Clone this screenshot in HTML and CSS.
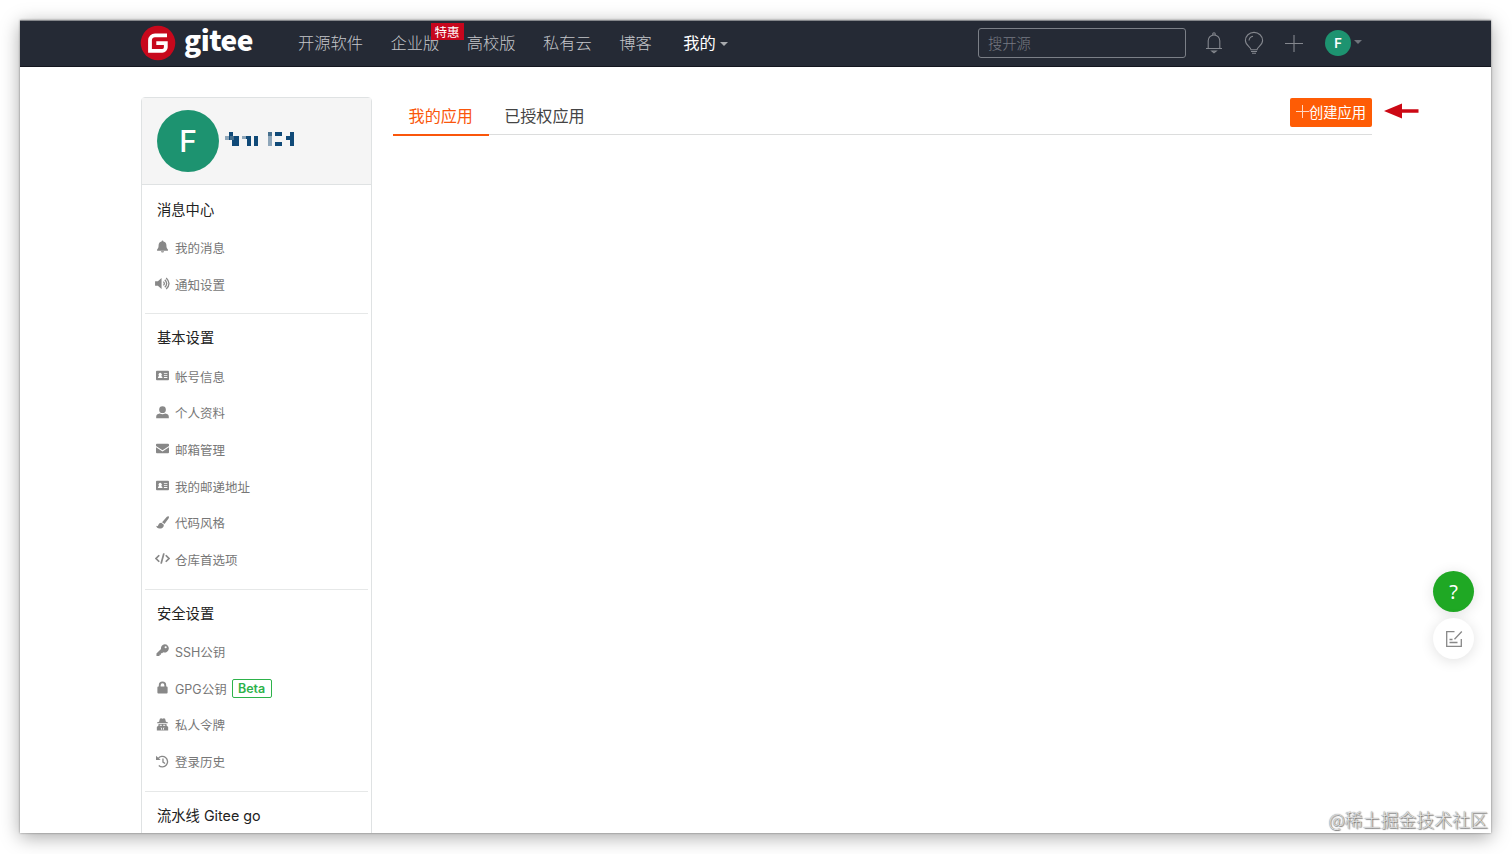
FILE: index.html
```html
<!DOCTYPE html>
<html lang="zh-CN">
<head>
    <meta charset="UTF-8">
    <meta name="viewport" content="width=device-width, initial-scale=1.0">
    <title>我的应用 - Gitee</title>
    <link rel="stylesheet" href="styles.css">
</head>
<body>
    <!-- shared icons -->
    <svg width="0" height="0" class="icon-defs">
        <symbol id="icon-card" viewBox="0 0 14 14">
            <path fill-rule="evenodd" d="M1 2h12q1 0 1 1v8q0 1-1 1H1q-1 0-1-1V3q0-1 1-1zM2 9.8h5q0-2-1.4-2.3a1.8 1.8 0 1 0-2.2 0Q2 7.8 2 9.8zM8.5 4.5v1h3.7v-1zM8.5 6.6v1h3.7v-1zM8.5 8.7v1h3.7v-1z"/>
        </symbol>
    </svg>

    <div class="window">
        <header class="navbar">
            <a class="logo">
                <svg width="36" height="36" viewBox="0 0 36 36">
                    <circle cx="18" cy="18" r="17.3" fill="#c7081c"/>
                    <path d="M27 10.3H15a5 5 0 0 0-5 5v10.5h12.3a3.500 3.500 0 0 0 3.500-3.500v-4.100h-9.500" fill="none" stroke="#fff" stroke-width="3.8"/>
                </svg>
                <span class="logo-text">gitee</span>
            </a>
            <nav class="nav-links">
                <a>开源软件</a>
                <a class="enterprise">企业版<span class="promo">特惠</span></a>
                <a>高校版</a>
                <a>私有云</a>
                <a>博客</a>
                <a class="mine">我的<i class="caret"></i></a>
            </nav>
            <div class="nav-right">
                <input class="search" type="text" placeholder="搜开源">
                <svg class="nav-icon bell" width="20" height="24" viewBox="0 0 20 24">
                    <path d="M2 17.5h16M4.2 17.5V9.8a5.8 5.8 0 0 1 11.6 0v7.7M8.8 4V3a1.2 1.2 0 0 1 2.4 0v1M7.8 20h4.4L10 21.8z"/>
                </svg>
                <svg class="nav-icon bulb" width="20" height="24" viewBox="0 0 20 24">
                    <path d="M7 18.7c0-2.6-5.6-4.2-5.6-9.2a8.6 8.1 0 0 1 17.2 0c0 5-5.6 6.6-5.6 9.2zM5 9.5a4.8 4.8 0 0 1 4-4.2M7 20.5h6M8 22.3h4"/>
                </svg>
                <svg class="nav-icon plus" width="20" height="24" viewBox="0 0 20 24">
                    <path d="M1 12.5h18M10 4v17"/>
                </svg>
                <span class="avatar-small">F</span>
                <i class="caret caret-dim"></i>
            </div>
        </header>

        <div class="container">
            <aside class="sidebar">
                <div class="profile">
                    <span class="avatar">F</span>
                    <!-- pixelated user name -->
                    <svg class="user-name" width="70" height="17" viewBox="0 0 70 17" shape-rendering="crispEdges">
                        <path fill="#104a78" d="M4 1h4v4h6v10H7V9H4zM18 5h8v10h-4V8h-4zM29 5h4v10h-4zM50 1h7v4h-7zM50 11h7v4h-7zM65 1h4v14h-4V9h-4V5h4z"/>
                        <path fill="#8fa7ba" d="M0 5h4v4H0zM17 5h4v3h-4zM43 5h4v10h-4z"/>
                        <path fill="#47708e" d="M43 1h4v4h-4zM5 5h4v4H5z"/>
                    </svg>
                </div>
                <section class="menu">
                    <h3>消息中心</h3>
                    <a><svg viewBox="0 0 14 14"><path d="M7 .5a1 1 0 0 1 1 1q3.2.8 3.2 4.2c0 3 .7 3.5 1.6 4.5q.7 1.3-.5 1.4H1.7q-1.2-.1-.5-1.4c.9-1 1.6-1.5 1.6-4.5Q2.8 2.3 6 1.5a1 1 0 0 1 1-1zM5.3 12h3.4a1.7 1.5 0 0 1-3.4 0z"/></svg>我的消息</a>
                    <a><svg class="wide" viewBox="0 0 16 14"><path d="M0 4.7h3l4-3.5v11.6l-4-3.5H0z"/><path class="line" d="M9 5q2 2 0 4M10.5 3q4 4 0 8M12 1q6 6 0 12"/></svg>通知设置</a>
                </section>
                <section class="menu">
                    <h3>基本设置</h3>
                    <a><svg><use href="#icon-card"/></svg>帐号信息</a>
                    <a><svg viewBox="0 0 14 14"><circle cx="7" cy="4" r="3.6"/><path d="M.2 13.3v-1.6Q.2 8.7 4 8.2q3 1.2 6 0 3.8.5 3.8 3.5v1.6z"/></svg>个人资料</a>
                    <a><svg viewBox="0 0 14 14"><path d="M1 2h12q1 0 1 1v1.200L7 8.800 0 4.200V3q0-1 1-1zM0 5.600l7 4.600 7-4.600V11q0 1-1 1H1q-1 0-1-1z"/></svg>邮箱管理</a>
                    <a><svg><use href="#icon-card"/></svg>我的邮递地址</a>
                    <a><svg viewBox="0 0 14 14"><path d="M13.6.4q.8.9-.1 2.4L9.2 8.7 6.5 6.6 11.7.9q1.2-1.1 1.9-.5zM5.7 7.3l2.7 2.2c.2 2.7-2 4-4.5 4-2.3 0-3.4-1.2-3.7-2.900 1.700.9 2 .1 2.400-1.200q.8-2.200 3.100-2.100z"/></svg>代码风格</a>
                    <a><svg class="wide" viewBox="0 0 16 14"><path class="line code" d="M4.5 3.500L1 7l3.500 3.500M11.500 3.500L15 7l-3.500 3.500M9.500 1.500l-3 11"/></svg>仓库首选项</a>
                </section>
                <section class="menu">
                    <h3>安全设置</h3>
                    <a><svg viewBox="0 0 14 14"><path fill-rule="evenodd" d="M9.3.3a4.4 4.4 0 1 1-1.5 8.5L6.6 10H5.3v1.5H3.8V13H.5v-2.7l4.9-4.9A4.4 4.4 0 0 1 9.3.3zM10.4 2.4a1.1 1.1 0 1 0 0 2.3 1.1 1.1 0 0 0 0-2.3z"/></svg>SSH公钥</a>
                    <a><svg viewBox="0 0 14 14"><path fill-rule="evenodd" d="M3 6V4.5a4 4 0 0 1 8 0V6h.5q1 0 1 1v5.5q0 1-1 1h-9q-1 0-1-1V7q0-1 1-1zM5 6h4V4.5a2 2 0 0 0-4 0z"/></svg>GPG公钥<span class="beta">Beta</span></a>
                    <a><svg viewBox="0 0 14 14"><path fill-rule="evenodd" d="M4.2.8Q5.3 0 7 .8q1.7-.8 2.8 0l.9 3.2 2 .6v1H1.3v-1l2-.6zM2.7 6.5h8.6v1.6l1.8 1.5v3.9H.9V9.6l1.8-1.5zM4 7.2v1.1h2.3V7.2zM7.7 7.2v1.1H10V7.2zM5 10l1 3h.6l-.3-2.3zM9 10l-1 3h-.6l.3-2.3z"/></svg>私人令牌</a>
                    <a><svg viewBox="0 0 14 14"><path d="M0 .8l5 4.7H0z"/><path class="line" d="M2.3 3.8A5.6 5.6 0 1 1 3 11.2M7.5 3.8v3.8l2.3 1.5"/></svg>登录历史</a>
                </section>
                <section class="menu">
                    <h3>流水线 Gitee go</h3>
                </section>
            </aside>

            <main class="content">
                <div class="tabs">
                    <a class="tab active">我的应用</a>
                    <a class="tab">已授权应用</a>
                    <button class="create-btn"><svg width="13" height="13" viewBox="0 0 13 13"><path d="M0 6.5h13M6.5 0v13" stroke="#ffd9c2"/></svg>创建应用</button>
                </div>
                <svg class="arrow" width="35" height="16" viewBox="0 0 35 16">
                    <path d="M0 8L18 .5V6.3H34.5V9.7H18V15.5z" fill="#cc0814"/>
                </svg>
            </main>
        </div>

        <div class="float-tools">
            <a class="help">?</a>
            <a class="feedback">
                <svg width="18" height="18" viewBox="0 0 18 18"><path d="M9.5 1.7H1.7v14.6h14.6V9M16.8 1.5L9.5 9.3M4.5 9.5h3M4.5 12.5h8" fill="none" stroke="#888" stroke-width="1.3"/></svg>
            </a>
        </div>
        <div class="watermark">@稀土掘金技术社区</div>
    </div>
</body>
</html>
```
FILE: styles.css
```css
* {
    box-sizing: border-box;
}
body {
    margin: 0;
    padding: 20px;
    height: 854px;
    overflow: hidden;
    background: #fff;
    font-family: "Inter", "Noto Sans CJK SC", sans-serif;
}
.icon-defs {
    position: absolute;
}
.window {
    position: relative;
    width: 1471px;
    height: 813px;
    overflow: hidden;
    background: #fff;
    border-top: 1px solid #85878b;
    box-shadow: 0 0 2px rgba(0, 0, 0, 0.4), 0 4px 18px rgba(0, 0, 0, 0.35);
}
.navbar {
    display: flex;
    align-items: center;
    height: 46px;
    padding: 0 129px 2px 120px;
    background: #252a35;
    border-bottom: 1px solid #14161f;
    font-family: "Noto Sans CJK SC", sans-serif;
}
.logo {
    display: flex;
    align-items: center;
    width: 158px;
}
.logo-text {
    margin: -7px 0 0 8px;
    color: #fff;
    font-size: 28px;
    font-weight: 900;
    line-height: 41px;
    letter-spacing: -0.5px;
}
.nav-links {
    display: flex;
    gap: 27.4px;
    margin-top: -1px;
    color: #c4c6ca;
    font-size: 16.3px;
    font-weight: 300;
}
.enterprise {
    position: relative;
}
.promo {
    position: absolute;
    left: 40px;
    top: -7px;
    width: 33px;
    height: 17px;
    background: #c7061d;
    color: #fff;
    font-size: 12.5px;
    font-weight: 400;
    line-height: 17px;
    text-align: center;
}
.mine {
    display: flex;
    align-items: center;
    margin-left: 4px;
    color: #fff;
    font-weight: 400;
}
.caret {
    margin: 4px 0 0 4px;
    border: 4px solid transparent;
    border-top: 4.5px solid #a8aaae;
    border-bottom: 0;
}
.nav-right {
    display: flex;
    align-items: center;
    margin-left: auto;
}
.search {
    width: 208px;
    height: 30px;
    padding: 0 9px 1px;
    background: transparent;
    border: 1px solid #7b7f87;
    border-radius: 3px;
    font-family: "Noto Sans CJK SC", sans-serif;
    font-size: 14.3px;
    font-weight: 300;
}
.search::placeholder {
    color: #777b83;
}
.nav-icon {
    fill: none;
    stroke: #84878e;
    stroke-width: 1.1;
}
.bell {
    margin-left: 18px;
}
.bulb,
.plus {
    margin-left: 20px;
}
.avatar-small {
    width: 26px;
    height: 26px;
    margin-left: 21px;
    border-radius: 50%;
    background: #1d9370;
    color: #fff;
    font-family: "Inter", sans-serif;
    font-size: 13px;
    font-weight: 600;
    line-height: 26px;
    text-align: center;
}
.caret-dim {
    margin: -1px 0 0 3px;
    border-top-color: #6f737b;
}
.container {
    display: flex;
    padding: 30px 119px 0 121px;
}
.sidebar {
    width: 231px;
    height: 770px;
    flex-shrink: 0;
    border: 1px solid #dfe2e3;
    border-radius: 4px;
}
.profile {
    display: flex;
    align-items: center;
    height: 87px;
    margin-bottom: 0.8px;
    padding-left: 15px;
    background: #f5f5f5;
    border-bottom: 1px solid #dfe2e3;
}
.avatar {
    width: 62px;
    height: 62px;
    border-radius: 50%;
    background: #1d9370;
    color: #fff;
    font-size: 30px;
    font-weight: 500;
    line-height: 62px;
    text-align: center;
}
.user-name {
    margin: -3px 0 0 6px;
}
.menu {
    margin: 0 3px;
    padding: 4px 0 11.1px 11px;
    border-bottom: 1px solid #e6e8e8;
}
.menu h3 {
    margin: 0 0 0 1px;
    color: #222;
    font-size: 14.3px;
    font-weight: 400;
    line-height: 39.2px;
}
.menu a {
    display: flex;
    align-items: center;
    height: 36.7px;
    color: #777;
    font-size: 12.5px;
}
.menu svg {
    width: 13px;
    height: 13px;
    margin-right: 6px;
    margin-top: -1px;
    fill: #888;
}
.menu svg.wide {
    width: 15px;
    margin-left: -1px;
    margin-right: 5px;
}
.menu .line {
    fill: none;
    stroke: #888;
    stroke-width: 1.4;
}
.menu .code {
    stroke-width: 1.9;
}
.beta {
    width: 40px;
    height: 19px;
    margin-left: 5px;
    border: 1px solid #2db24a;
    border-radius: 2px;
    color: #2db24a;
    font-weight: 600;
    line-height: 18px;
    text-align: center;
}
.content {
    display: flex;
    align-items: flex-start;
    flex: 1;
    margin-left: 21px;
}
.tabs {
    display: flex;
    width: 979px;
    height: 38px;
    border-bottom: 1px solid #dcdddd;
}
.tab {
    height: 39px;
    padding: 0 15.6px;
    color: #444;
    font-size: 16.1px;
    line-height: 38px;
}
.tab.active {
    border-bottom: 2px solid #fa560b;
    color: #fa560b;
}
.create-btn {
    display: flex;
    align-items: center;
    justify-content: center;
    width: 82px;
    height: 29px;
    margin: 1px 0 0 auto;
    padding: 0 0 2px;
    background: #fe5c05;
    border: 0;
    border-radius: 2px;
    color: #fff;
    font-family: "Noto Sans CJK SC", sans-serif;
    font-size: 14.3px;
}
.arrow {
    flex-shrink: 0;
    margin: 6px -60px 0 12px;
}
.float-tools {
    position: absolute;
    right: 17px;
    top: 550px;
    display: flex;
    flex-direction: column;
    gap: 6px;
}
.float-tools a {
    display: flex;
    align-items: center;
    justify-content: center;
    width: 41px;
    height: 41px;
    border-radius: 50%;
    box-shadow: 0 2px 14px rgba(0, 0, 0, 0.12);
}
.help {
    background: #1fa824;
    color: #fff;
    font-family: "Noto Sans", sans-serif;
    font-size: 20px;
}
.feedback {
    background: #fff;
}
.watermark {
    position: absolute;
    right: 3px;
    bottom: 1px;
    color: #e4e4e4;
    font-family: "Noto Sans CJK SC", sans-serif;
    font-size: 17.9px;
    font-weight: 300;
    line-height: 26px;
    text-shadow: 0 0 1px #555, 1px 1px 1px #777;
}
```
